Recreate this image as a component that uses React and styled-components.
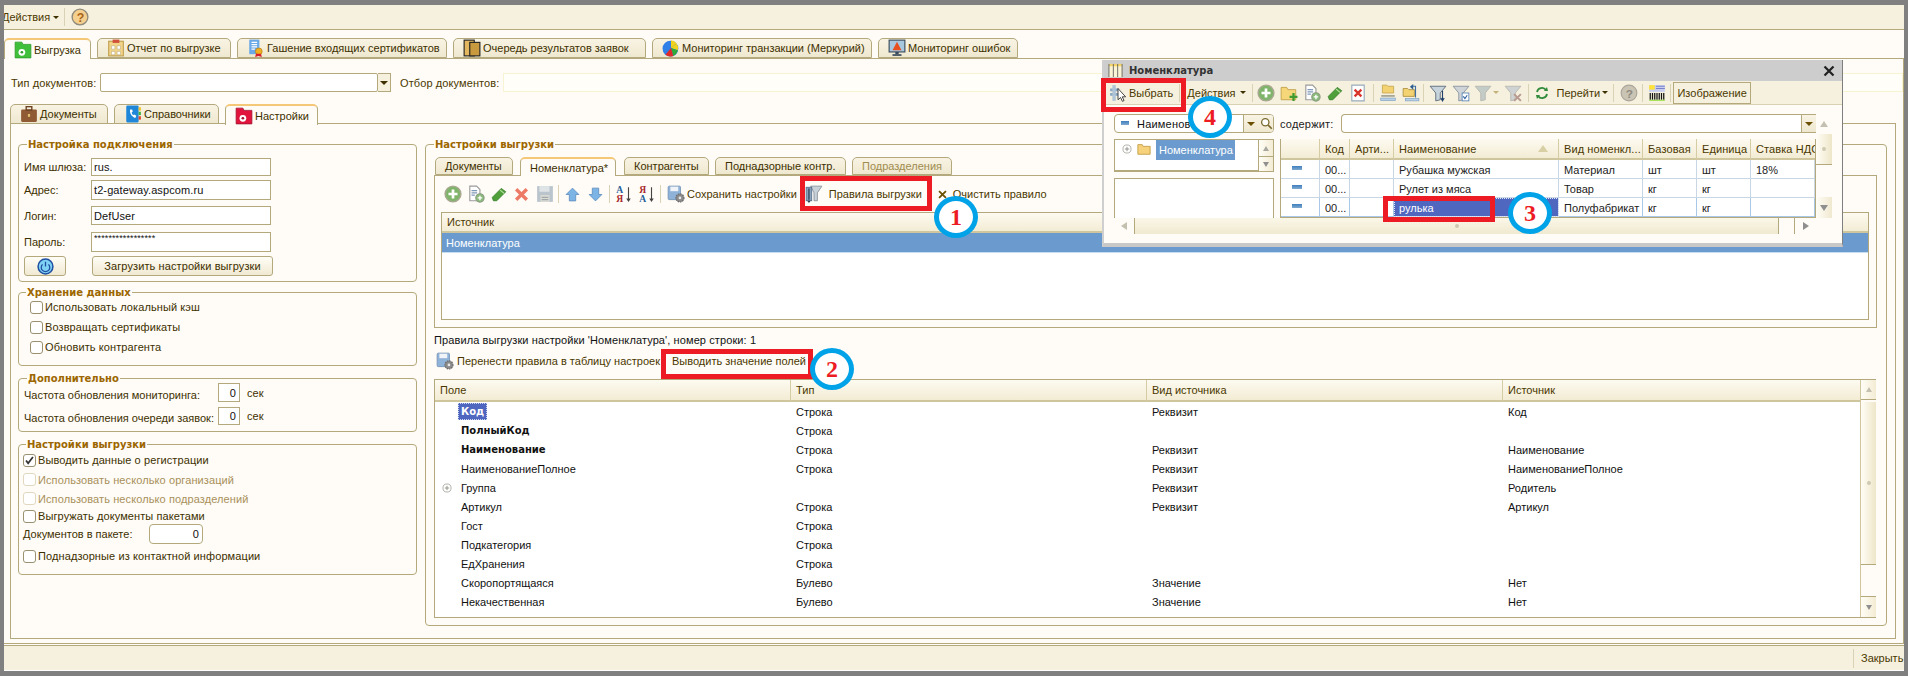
import React from "react";
import styled, { createGlobalStyle } from "styled-components";

const line = "#b3a97c";
const paper = "#fffcf7";
const bar = "#f6f1df";
const ink = "#4a3800";

const Global = createGlobalStyle`
  html, body { margin: 0; padding: 0; background: #808080; }
  * { box-sizing: border-box; }
  body { font-family: "Liberation Sans", Arial, sans-serif; font-size: 11px; color: ${ink}; }
`;

const Frame = styled.div`
  position: relative;
  width: 1908px;
  height: 676px;
  overflow: hidden;
  background: #808080;
  padding: 5px 4px 5px 4px;
  display: flex;
  flex-direction: column;
`;
const TopBar = styled.div`
  height: 25px;
  flex: none;
  background: ${bar};
  border-bottom: 1px solid ${line};
  display: flex;
  align-items: center;
  overflow: hidden;
`;
const Main = styled.div`
  flex: 1;
  min-height: 0;
  background: ${paper};
  padding-top: 8px;
  display: flex;
  flex-direction: column;
`;
const TabStrip = styled.div`
  display: flex;
  flex: none;
  height: ${(p) => p.$h}px;
  margin-left: ${(p) => p.$ml || 0}px;
  margin-top: ${(p) => p.$mt || 0}px;
  position: relative;
  z-index: 1;
`;
const Tab = styled.div`
  width: ${(p) => p.$w}px;
  margin-right: ${(p) => p.$gap ?? 6}px;
  height: ${(p) => (p.$active ? "calc(100% + 1px)" : "100%")};
  display: flex;
  align-items: center;
  gap: 2px;
  padding-left: ${(p) => p.$pl ?? 9}px;
  border: 1px solid ${line};
  border-bottom: ${(p) => (p.$active ? "none" : `1px solid ${line}`)};
  border-top: ${(p) => (p.$active ? "2px solid #f5c878" : `1px solid ${line}`)};
  border-radius: 5px 5px 0 0;
  background: ${(p) => (p.$active ? paper : "linear-gradient(#f8f3e3, #efe8d0)")};
  color: ${(p) => (p.$off ? "#a08c50" : "#3d3000")};
  white-space: nowrap;
`;
const Page = styled.div`
  flex: 1;
  min-height: 0;
  border: 1px solid ${line};
  border-width: 1px 1px 1px 0;
  padding: 14px 0 4px 6px;
  display: flex;
  flex-direction: column;
`;
const DocRow = styled.div`
  display: flex;
  align-items: center;
  height: 19px;
  flex: none;
  margin-bottom: 12px;
  padding-left: 1px;
`;
const DocLabel = styled.span`
  white-space: nowrap;
  width: ${(p) => p.$w}px;
  letter-spacing: 0.1px;
`;
const Combo = styled.div`
  width: ${(p) => p.$w}px;
  height: 19px;
  background: #fff;
  border: 1px solid ${line};
  border-radius: 2px;
`;
const ComboDrop = styled.div`
  width: 13px;
  height: 19px;
  margin: 0 9px 0 0;
  background: ${bar};
  border: 1px solid ${line};
  border-left: none;
  display: flex;
  align-items: center;
  justify-content: center;
`;
const FilterBox = styled.div`
  flex: 1;
  height: 19px;
  border: 1px solid #f8f3d0;
  background: #fffef8;
`;
const TriangleDown = styled.i`
  display: block;
  flex: none;
  width: 0;
  height: 0;
  margin-left: ${(p) => p.$ml || 0}px;
  border-left: ${(p) => p.$s || 4}px solid transparent;
  border-right: ${(p) => p.$s || 4}px solid transparent;
  border-top: ${(p) => p.$s || 4}px solid ${(p) => p.$c || "#3d3000"};
`;
const Panel = styled.div`
  flex: 1;
  min-height: 0;
  border: 1px solid ${line};
  margin-right: 7px;
  margin-top: -1px;
  padding: 20px 8px 0 7px;
  display: flex;
  gap: 8px;
`;
const LeftCol = styled.div`
  width: 399px;
  flex: none;
`;
const Group = styled.div`
  border: 1px solid ${line};
  border-radius: 4px;
  height: ${(p) => p.$h}px;
  margin-top: ${(p) => p.$mt || 0}px;
  padding-left: ${(p) => p.$pl || 0}px;
`;
const Legend = styled.div`
  display: table;
  height: 14px;
  line-height: 14px;
  margin: -7px 0 0 ${(p) => p.$ml ?? 8}px;
  padding: 0 1px;
  background: ${paper};
  color: #9c6600;
  font-family: "DejaVu Sans", sans-serif;
  font-weight: 700;
  font-size: 10px;
  white-space: nowrap;
`;
const Row = styled.div`
  display: flex;
  align-items: center;
  height: ${(p) => p.$h}px;
  margin-top: ${(p) => p.$mt || 0}px;
  white-space: nowrap;
  letter-spacing: 0.1px;
  color: ${(p) => (p.$off ? "#a8905a" : "#3d3000")};
`;
const FieldLabel = styled.span`
  display: block;
  width: ${(p) => p.$w}px;
  flex: none;
  padding-top: ${(p) => p.$pt || 0}px;
  letter-spacing: 0;
`;
const Field = styled.div`
  width: ${(p) => p.$w}px;
  height: 100%;
  background: #fff;
  border: 1px solid ${line};
  border-radius: ${(p) => p.$r || 0}px;
  padding: 0 ${(p) => (p.$right ? 3 : 2)}px;
  display: flex;
  align-items: ${(p) => (p.$top ? "flex-start" : "center")};
  justify-content: ${(p) => (p.$right ? "flex-end" : "flex-start")};
  color: #111;
  font-size: ${(p) => p.$fs || 11}px;
`;
const Btn = styled.div`
  width: ${(p) => p.$w}px;
  height: 20px;
  margin-left: ${(p) => p.$ml || 0}px;
  border: 1px solid ${line};
  border-radius: 3px;
  background: linear-gradient(#fffdf6, #f0e9d2);
  display: flex;
  align-items: center;
  justify-content: center;
  color: #3d3000;
`;
const Check = styled.span`
  width: 13px;
  height: 13px;
  flex: none;
  margin-right: 2px;
  border: 1px solid ${(p) => (p.$off ? "#e0d9c0" : "#9a9170")};
  border-radius: 3px;
  background: #fff;
  display: flex;
  align-items: center;
  justify-content: center;
`;
const Unit = styled.span`
  margin-left: 7px;
`;
const RightCol = styled.div`
  flex: 1;
  min-width: 0;
`;
const InnerPanel = styled.div`
  width: 1443px;
  height: 153px;
  margin: 0 0 0 8px;
  border: 1px solid ${line};
  padding: 0 7px 0 6px;
`;
const Tools = styled.div`
  display: flex;
  align-items: center;
  height: ${(p) => p.$h}px;
  margin-left: ${(p) => p.$ml || 0}px;
  white-space: nowrap;
  color: #4a3800;
`;
const Slot = styled.span`
  width: ${(p) => p.$w || 23}px;
  flex: none;
  display: flex;
  align-items: center;
  justify-content: center;
  margin-left: ${(p) => p.$ml || 0}px;
`;
const Sep = styled.span`
  width: 1px;
  height: 18px;
  flex: none;
  margin: 0 ${(p) => p.$r ?? 2}px 0 ${(p) => p.$l ?? 2}px;
  background: #d9d2b4;
`;
const ToolText = styled.span`
  margin-left: ${(p) => p.$ml || 0}px;
`;
const SourceTable = styled.div`
  height: 108px;
  border: 1px solid ${line};
  background: #fff;
`;
const HeadCell = styled.div`
  background: linear-gradient(#fdfaf0, #f3ecd4);
  border-bottom: 2px solid #cfc69e;
  border-right: ${(p) => (p.$noline ? "none" : `1px solid #d5cca6`)};
  height: ${(p) => p.$h || 20}px;
  display: flex;
  align-items: center;
  padding-left: ${(p) => p.$pl || 5}px;
  color: #4a3800;
  white-space: nowrap;
  overflow: hidden;
`;
const SelectedRow = styled.div`
  height: 20px;
  background: #6b9bce;
  color: #fff;
  padding-left: 4px;
  display: flex;
  align-items: center;
  border-bottom: 1px solid #c7ddf0;
`;
const RulesTitle = styled.div`
  margin: 5px 0 0 8px;
  height: 14px;
  line-height: 14px;
  color: #111;
  letter-spacing: 0.1px;
`;
const RulesBar = styled(Tools)`
  margin: 3px 0 0 8px;
  height: 22px;
`;
const RulesTable = styled.div`
  display: grid;
  grid-template-columns: 356px 356px 356px 357px 16px;
  grid-template-rows: 22px 1fr;
  width: 1442px;
  height: 239px;
  margin: 7px 0 0 8px;
  border: 1px solid ${line};
  background: #fff;
`;
const RowsBody = styled.div`
  grid-column: 1 / 5;
`;
const DataRow = styled.div`
  display: grid;
  grid-template-columns: 356px 356px 356px 357px;
  height: 19px;
  align-items: center;
  color: #111;
`;
const NameCell = styled.div`
  display: flex;
  align-items: center;
  padding-left: ${(p) => (p.$expand ? 7 : 26)}px;
  font-family: ${(p) => (p.$bold ? '"DejaVu Sans", sans-serif' : "inherit")};
  font-weight: ${(p) => (p.$bold ? 700 : 400)};
  font-size: ${(p) => (p.$bold ? 10 : 11)}px;
`;
const Hilite = styled.span`
  background: #5067c0;
  color: #fff;
  outline: 1px dotted #cdd6f0;
  outline-offset: -1px;
  padding: 3px 3px;
  margin-left: -3px;
`;
const Cell = styled.div`
  padding-left: 5px;
`;
const ExpandGap = styled.span`
  width: 9px;
  flex: none;
`;
const VBar = styled.div`
  grid-column: 5;
  grid-row: ${(p) => p.$row};
  display: flex;
  flex-direction: column;
  border-left: 1px solid #cfc69e;
  background: ${paper};
`;
const ScrollBtn = styled.div`
  height: ${(p) => p.$h}px;
  flex: none;
  display: flex;
  align-items: center;
  justify-content: center;
  background: ${(p) => p.$bg || "linear-gradient(90deg, #fffdf6, #f3ecd4)"};
  border-bottom: ${(p) => (p.$line ? `1px solid ${line}` : "none")};
  border-top: ${(p) => (p.$topline ? `1px solid ${line}` : "none")};
  width: 100%;
`;
const ScrollThumb = styled.div`
  height: ${(p) => p.$h}px;
  flex: none;
  display: flex;
  align-items: center;
  justify-content: center;
  background: linear-gradient(90deg, #fffdf6, #eee6c9);
  border-bottom: 1px solid ${line};
`;
const ScrollGap = styled.div`
  flex: 1;
`;
const Nub = styled.i`
  width: 4px;
  height: 4px;
  border-radius: 50%;
  background: #cfc9b2;
`;
const TriUp = styled.i`
  display: block;
  flex: none;
  width: 0;
  height: 0;
  border-left: ${(p) => p.$s || 4}px solid transparent;
  border-right: ${(p) => p.$s || 4}px solid transparent;
  border-bottom: ${(p) => (p.$s || 4) + 2}px solid ${(p) => p.$c || "#c4c0b0"};
`;
const TriDown = styled(TriUp)`
  border-bottom: none;
  border-top: ${(p) => (p.$s || 4) + 2}px solid ${(p) => p.$c || "#8f8f8f"};
`;
const TriRight = styled.i`
  display: block;
  width: 0;
  height: 0;
  border-top: 4px solid transparent;
  border-bottom: 4px solid transparent;
  border-left: 6px solid ${(p) => p.$c || "#8f8f8f"};
`;
const TriLeft = styled(TriRight)`
  border-left: none;
  border-right: 6px solid ${(p) => p.$c || "#c4c0b0"};
`;
const StatusBar = styled.div`
  height: 26px;
  flex: none;
  margin-top: 1px;
  background: ${bar};
  border-top: 1px solid ${line};
  border-bottom: 1px solid #fff;
  display: flex;
  align-items: center;
  justify-content: flex-end;
  overflow: hidden;
`;
const StatusSep = styled.span`
  width: 1px;
  height: 19px;
  background: #d9d2b4;
  margin-right: 7px;
`;
const CloseText = styled.span`
  width: 43px;
  overflow: hidden;
  white-space: nowrap;
`;

/* popup window */
const Window = styled.div`
  position: absolute;
  left: 1102px;
  top: 60px;
  width: 741px;
  height: 187px;
  z-index: 5;
  background: ${paper};
  border-right: 1px solid #7f7f7f;
  border-left: 2px solid #cfcfcf;
  border-bottom: 4px solid #c8c8c8;
  display: flex;
  flex-direction: column;
`;
const WinTitle = styled.div`
  height: 21px;
  flex: none;
  background: #cdcdcd;
  display: flex;
  align-items: center;
  padding: 0 7px 0 4px;
  font-family: "DejaVu Sans", sans-serif;
  font-size: 10px;
  font-weight: 700;
  color: #333;
`;
const WinName = styled.span`
  flex: 1;
  margin-left: 6px;
`;
const WinTools = styled(Tools)`
  flex: none;
  background: ${bar};
  border-bottom: 1px solid #d8d1b2;
  padding-left: 2px;
`;
const ImageBtn = styled.span`
  width: 78px;
  height: 22px;
  display: flex;
  align-items: center;
  justify-content: center;
  background: ${bar};
  border: 1px solid ${line};
  color: #4a3800;
`;
const WinBody = styled.div`
  display: flex;
  flex: none;
  padding: 9px 0 0 10px;
`;
const WinLeft = styled.div`
  width: 160px;
  flex: none;
`;
const RoundCombo = styled.div`
  height: 19px;
  border: 1px solid ${line};
  border-radius: 4px;
  background: #fff;
  display: flex;
  align-items: center;
  color: #111;
  overflow: hidden;
`;
const ComboBtn = styled.span`
  width: ${(p) => p.$w}px;
  height: 100%;
  flex: none;
  display: flex;
  align-items: center;
  justify-content: center;
  background: linear-gradient(#f8f3e3, #efe8d0);
  border-left: 1px solid ${(p) => (p.$noline ? "transparent" : line)};
  border-top: ${(p) => (p.$framed ? `1px solid ${line}` : "none")};
  border-bottom: ${(p) => (p.$framed ? `1px solid ${line}` : "none")};
`;
const ComboText = styled.span`
  flex: 1;
  min-width: 0;
  display: flex;
  align-items: center;
  gap: 8px;
  padding-left: 6px;
  letter-spacing: 0.2px;
  white-space: nowrap;
  overflow: hidden;
`;
const TreeBox = styled.div`
  height: 33px;
  margin-top: 6px;
  border: 1px solid ${line};
  border-bottom-width: 2px;
  background: #fff;
  display: flex;
`;
const TreeBody = styled.div`
  flex: 1;
  display: flex;
  align-items: flex-start;
  padding-left: 7px;
  gap: 5px;
  color: #fff;
`;
const TreeIcon = styled.span`
  padding-top: ${(p) => p.$pt}px;
`;
const TreeSel = styled.span`
  background: #6b9bce;
  height: 20px;
  width: 79px;
  display: flex;
  align-items: center;
  padding-left: 3px;
`;
const TreeRail = styled.div`
  width: 15px;
  flex: none;
  border-left: 1px solid ${line};
  display: flex;
  flex-direction: column;
`;
const GroupBox = styled.div`
  height: 40px;
  margin-top: 6px;
  border: 1px solid ${line};
  border-bottom: none;
  background: #fff;
`;
const WinRight = styled.div`
  width: 536px;
  flex: none;
  margin-left: 6px;
`;
const ContainsRow = styled.div`
  display: flex;
  align-items: center;
  height: 19px;
  color: #222;
  letter-spacing: 0.2px;
`;
const ContainsLabel = styled.span`
  width: 61px;
  flex: none;
`;
const ContainsField = styled(RoundCombo)`
  flex: 1;
  border-radius: 4px 0 0 4px;
  border-right: none;
`;
const GoodsTable = styled.div`
  margin-top: 6px;
  height: 79px;
  border: 1px solid ${line};
  border-top: none;
  background: #fff;
  display: grid;
  grid-template-columns: 39px 30px 44px 165px 84px 54px 54px 1fr;
  grid-template-rows: 21px repeat(3, 19px);
  overflow: hidden;
`;
const GCell = styled.div`
  display: flex;
  align-items: center;
  padding: 2px 0 0 5px;
  color: #222;
  white-space: nowrap;
  overflow: hidden;
  border-right: 1px solid ${(p) => (p.$sel ? "#a9c8e8" : "#c9d6e4")};
  border-bottom: 1px solid ${(p) => (p.$sel ? "#a9c8e8" : "#c9d6e4")};
`;
const GSelected = styled(GCell)`
  background: #5067c0;
  color: #fff;
  outline: 1px dotted #dfe6fa;
  outline-offset: -1px;
`;
const GHead = styled(HeadCell)`
  height: 21px;
  padding-left: 5px;
  letter-spacing: 0.1px;
  justify-content: ${(p) => (p.$between ? "space-between" : "flex-start")};
  padding-right: 10px;
`;
const RowMark = styled.i`
  display: block;
  flex: none;
  width: ${(p) => p.$w || 10}px;
  height: 4px;
  margin: 0 0 ${(p) => p.$mb ?? 4}px ${(p) => p.$ml ?? 6}px;
  background: linear-gradient(#3f7fbf, #7fa9cf);
`;
const WinRail = styled.div`
  width: 16px;
  flex: none;
  height: 104px;
  display: flex;
  flex-direction: column;
`;
const WinHScroll = styled.div`
  display: flex;
  height: 16px;
  width: 702px;
  margin-left: 10px;
  background: ${paper};
`;
const HBtn = styled.div`
  width: ${(p) => p.$w}px;
  flex: none;
  display: flex;
  align-items: center;
  justify-content: center;
  background: ${paper};
  border-right: ${(p) => (p.$r ? `1px solid ${line}` : "none")};
  border-left: ${(p) => (p.$l ? `1px solid ${line}` : "none")};
`;
const HThumb = styled.div`
  flex: 1;
  display: flex;
  align-items: center;
  justify-content: center;
  background: linear-gradient(#fbf7e8, #f0e9d0);
  border-right: 1px solid ${line};
`;
const HGap = styled.div`
  width: 15px;
  flex: none;
`;

/* paint marks over the screenshot */
const RedBox = styled.div`
  position: absolute;
  left: ${(p) => p.$x}px;
  top: ${(p) => p.$y}px;
  width: ${(p) => p.$w}px;
  height: ${(p) => p.$h}px;
  border: 5px solid #ed1c24;
  z-index: 8;
`;
const Mark = styled.div`
  position: absolute;
  left: ${(p) => p.$x - 22}px;
  top: ${(p) => p.$y - 21}px;
  width: 44px;
  height: 42px;
  border: 5px solid #00a2e8;
  border-radius: 50%;
  background: #fff;
  z-index: 9;
  display: flex;
  align-items: center;
  justify-content: center;
  color: #ed1c24;
  font: 700 24px "Liberation Serif", serif;
`;

const Svg = ({ children, s = 16 }) => (
  <svg width={s} height={s} viewBox="0 0 16 16" style={{ display: "block", flex: "none" }}>
    {children}
  </svg>
);

const PlusGreen = () => (
  <Svg s={18}>
    <circle cx="8" cy="8" r="7" fill="#7fb56a" stroke="#a8a890" strokeWidth="1.3" />
    <path d="M8 4v8M4 8h8" stroke="#fff" strokeWidth="2.4" />
  </Svg>
);
const DocPlus = () => (
  <Svg s={18}>
    <path d="M2.5 1h6l3 3v10h-9z" fill="#fff" stroke="#9a9a9a" />
    <path d="M4 5h5M4 7h5M4 9h3" stroke="#7f97b8" />
    <circle cx="11.5" cy="11.5" r="3.7" fill="#8abb7a" stroke="#8a9a80" />
    <path d="M11.5 9.5v4M9.5 11.5h4" stroke="#fff" strokeWidth="1.2" />
  </Svg>
);
const Pencil = () => (
  <Svg s={18}>
    <path d="M2 11L10 3l4 3-8 8H3z" fill="#4fa03a" stroke="#2f7a24" strokeWidth=".7" />
    <path d="M9 4.5l3.5 3" stroke="#bfe3a8" />
  </Svg>
);
const CrossRed = () => (
  <Svg s={17}>
    <path d="M3 3l10 10M13 3L3 13" stroke="#ec7a66" strokeWidth="3.2" />
  </Svg>
);
const FloppyGrey = () => (
  <Svg s={18}>
    <rect x="1" y="1" width="14" height="14" fill="#b9c4cc" />
    <rect x="3" y="1" width="9" height="5" fill="#dfe4e6" />
    <rect x="4" y="9" width="8" height="6" fill="#dcdcd4" />
    <path d="M5 11h6M5 13h6" stroke="#a0a8ac" />
  </Svg>
);
const ArrowBlue = ({ down }) => (
  <Svg s={17}>
    <path
      d={down ? "M5 2h6v6h3l-6 6-6-6h3z" : "M8 2l6 6h-3v6H5V8H2z"}
      fill="#7db4e6"
      stroke="#5f8fbf"
      strokeWidth=".8"
    />
  </Svg>
);
const Sort = ({ rev }) => (
  <Svg s={18}>
    <text x="1" y="7.5" fontSize="8.5" fontWeight="700" fontFamily="Liberation Serif" fill={rev ? "#a8282c" : "#1f5f9a"}>
      {rev ? "Я" : "A"}
    </text>
    <text x="1" y="15.5" fontSize="8.5" fontWeight="700" fontFamily="Liberation Serif" fill={rev ? "#1f5f9a" : "#a8282c"}>
      {rev ? "A" : "Я"}
    </text>
    <path d="M12 2v11" stroke="#444" />
    <path d="M10 12h4l-2 3z" fill="#444" />
  </Svg>
);
const FloppyGear = () => (
  <Svg s={18}>
    <rect x="1" y="1" width="11" height="12" rx="1" fill="#8fb2d8" stroke="#6f8fb2" strokeWidth=".7" />
    <rect x="3" y="1.5" width="7" height="4" fill="#f0f4f8" />
    <circle cx="11.5" cy="11.5" r="3.6" fill="#8a8a8a" stroke="#6a6a6a" strokeDasharray="1.3 .8" />
    <circle cx="11.5" cy="11.5" r="1.2" fill="#e8e8e8" />
  </Svg>
);
const Funnel = ({ muted, tone = "#c8d4dc" }) => (
  <Svg s={18}>
    <path d="M1 2h14L10 8v6l-4 1V8z" fill={tone} stroke={muted ? "#b8b8b0" : "#5a6a78"} strokeWidth=".8" />
    {!muted && <path d="M12 6v8M10.5 12.5L12 15l1.5-2.5" stroke="#1f3f6a" fill="none" />}
  </Svg>
);
const FunnelCheck = () => (
  <Svg s={18}>
    <path d="M1 2h14L10 8v6l-4 1V8z" fill="#cfd4d8" stroke="#8a949c" strokeWidth=".8" />
    <rect x="9" y="8" width="6" height="7" fill="#fff" stroke="#4a78b0" strokeWidth=".7" />
    <path d="M10 11l1.5 2 2-3" stroke="#2f5f9f" fill="none" />
  </Svg>
);
const FunnelOff = () => (
  <Svg s={18}>
    <path d="M1 2h14L10 8v6l-4 1V8z" fill="#cfd2d2" stroke="#b8b8b0" strokeWidth=".8" />
    <path d="M9 9l6 6M15 9l-6 6" stroke="#b89a90" strokeWidth="1.8" />
  </Svg>
);
const FolderPlus = () => (
  <Svg s={18}>
    <path d="M1 3h5l1 2h7v9H1z" fill="#f5d77a" stroke="#c2a24a" strokeWidth=".8" />
    <path d="M12 8v7M8.5 11.5h7" stroke="#3f9a2f" strokeWidth="2" />
  </Svg>
);
const DocCross = () => (
  <Svg s={18}>
    <path d="M2.5 1h11v14h-11z" fill="#fff" stroke="#9ab" />
    <path d="M5 5l6 6M11 5l-6 6" stroke="#d8342a" strokeWidth="2" />
  </Svg>
);
const FolderLine = () => (
  <Svg s={18}>
    <path d="M3 1h4l1 1h5v6H3z" fill="#f3d271" stroke="#c2a24a" strokeWidth=".7" />
    <rect x="2" y="10" width="12" height="1.2" fill="#8e8e7a" />
    <rect x="1.5" y="12.5" width="13" height="2.2" fill="#b8d2ea" stroke="#7f9fbf" strokeWidth=".6" />
  </Svg>
);
const FolderUp = () => (
  <Svg s={18}>
    <path d="M1 4h4l1 1h5v6H1z" fill="#f3d271" stroke="#a68a3a" strokeWidth=".7" />
    <path d="M9 2h3v10" stroke="#3f6f9f" fill="none" />
    <path d="M7 2.5L10 0v5z" fill="#2f5f8f" />
    <rect x="3" y="13" width="12" height="2" fill="#b8d2ea" stroke="#7f9fbf" strokeWidth=".6" />
  </Svg>
);
const Refresh = () => (
  <Svg>
    <path d="M3 7a5 5 0 0 1 9-2" stroke="#2f8a3a" strokeWidth="1.8" fill="none" />
    <path d="M13 9a5 5 0 0 1-9 2" stroke="#2f8a3a" strokeWidth="1.8" fill="none" />
    <path d="M10 6l4 0-1-4zM6 10H2l1 4z" fill="#2f8a3a" />
  </Svg>
);
const HelpGrey = () => (
  <Svg s={18}>
    <circle cx="8" cy="8" r="7" fill="#c9c4b4" stroke="#aaa59a" />
    <text x="5.2" y="12" fontSize="10.5" fontWeight="700" fontFamily="Liberation Sans" fill="#8f8a80">?</text>
  </Svg>
);
const Barcode = () => (
  <Svg s={18}>
    <rect x="1" y="1" width="14" height="6" fill="#c8cdf0" />
    <rect x="1" y="1" width="5" height="4" fill="#ffe23a" />
    <path d="M7 2h8M7 4h8" stroke="#7a82c8" />
    <path d="M2 8v6M4 8v6M6 8v6M8 8v6M10 8v6M12 8v6M14 8v6" stroke="#111" strokeWidth="1.1" />
    <rect x="1" y="14" width="14" height="1" fill="#9ce04a" />
  </Svg>
);
const PickArrow = () => (
  <Svg s={18}>
    <rect x="1" y="4" width="8" height="2.5" fill="#8aa8c4" />
    <rect x="1" y="8" width="8" height="2.5" fill="#8aa8c4" />
    <rect x="3" y="1" width="3" height="14" fill="#b0c4d8" />
    <path d="M8 4v10l2.3-2 1.6 3.4 1.5-.7-1.6-3.3h3z" fill="#fff" stroke="#333" strokeWidth=".8" />
  </Svg>
);
const RulesIcon = () => (
  <Svg s={18}>
    <path d="M5 1h10L11 7v7H8V7z" fill="#c8d0d8" stroke="#7a8894" strokeWidth=".7" />
    <rect x="1" y="2" width="5" height="12" fill="#8aa2bc" stroke="#4f6a88" strokeWidth=".7" />
    <path d="M3.5 3v10" stroke="#23394f" />
    <path d="M2 14h3l-1.5 2z" fill="#23394f" />
  </Svg>
);
const XBrown = () => (
  <Svg s={11}>
    <path d="M3 3l10 10M13 3L3 13" stroke="#6a5000" strokeWidth="2.6" />
  </Svg>
);
const Expander = () => (
  <Svg s={10}>
    <circle cx="8" cy="8" r="6.5" fill="#fff" stroke="#a8a8a0" strokeWidth="1.4" />
    <path d="M8 4.5v7M4.5 8h7" stroke="#8a8a82" strokeWidth="1.4" />
  </Svg>
);
const Folder = () => (
  <Svg s={14}>
    <path d="M1 3h5l1 2h8v9H1z" fill="#f7d27c" stroke="#c29a42" />
  </Svg>
);
const Power = () => (
  <Svg s={17}>
    <circle cx="8" cy="8" r="7" fill="#7fd0f5" stroke="#1f4fa0" strokeWidth="1.4" />
    <path d="M5.2 6a4 4 0 1 0 5.6 0" stroke="#1f4fa0" strokeWidth="1.2" fill="none" />
    <path d="M8 3.5V8" stroke="#1f4fa0" strokeWidth="1.2" />
  </Svg>
);
const TabFolder = ({ c = "#3fbf3a", dark = "#2e9a2a" }) => (
  <Svg s={18}>
    <path d="M1 1h6l1 2h7v12H1z" fill={c} stroke={dark} strokeWidth=".7" />
    <circle cx="7" cy="10" r="3" fill="#fff" />
    <circle cx="7" cy="10" r="1.2" fill={dark} />
  </Svg>
);
const Clipboard = () => (
  <Svg s={18}>
    <rect x="1.5" y="2" width="13" height="13" fill="#f3d58a" stroke="#c0a050" />
    <rect x="5" y="0.5" width="6" height="3" fill="#d0523a" />
    <path d="M4 6h3v3H4zM9 6h3v3H9zM4 11h3v3H4zM9 11h3v3H9z" fill="#fff" stroke="#a89a70" strokeWidth=".4" />
  </Svg>
);
const Cert = () => (
  <Svg s={18}>
    <rect x="2" y="0.5" width="9" height="13" fill="#6aa8e8" />
    <path d="M4 3h5M4 5h5M4 7h5M4 9h3" stroke="#fff" strokeWidth=".9" />
    <circle cx="10.5" cy="11" r="3" fill="#f0b020" stroke="#b87a10" strokeWidth=".6" />
    <path d="M8 13l-.8 3 3-1 3 1-.8-3z" fill="#d8202a" />
  </Svg>
);
const Queue = () => (
  <Svg s={18}>
    <rect x="1" y="1" width="9" height="14" fill="#e2b760" stroke="#222" />
    <rect x="6" y="3" width="9" height="12" fill="#c8993e" stroke="#222" />
  </Svg>
);
const Pie = () => (
  <Svg s={18}>
    <circle cx="7.5" cy="8.5" r="7" fill="#2f7fe8" />
    <path d="M8 8V1a7 7 0 0 1 5 3z" fill="#f2d21a" />
    <path d="M8 8l5-4a7 7 0 0 1 1 6z" fill="#f2d21a" />
    <path d="M8 8l6 2a7 7 0 0 1-4 5z" fill="#2faa3a" />
    <path d="M8 8l2 7a7 7 0 0 1-7-1z" fill="#e02a2a" />
  </Svg>
);
const Monitor = () => (
  <Svg s={18}>
    <rect x="1" y="1" width="14" height="10.5" fill="#a8c8e0" stroke="#3a4a5a" />
    <path d="M8 2.5l4 7.5H4z" fill="#e8501f" />
    <rect x="6.5" y="11.5" width="3" height="2" fill="#3a4a5a" />
    <rect x="4" y="13.5" width="8" height="1.5" fill="#3a4a5a" />
  </Svg>
);
const Briefcase = () => (
  <Svg s={18}>
    <rect x="1" y="4" width="14" height="11" rx="1" fill="#8f5a34" />
    <rect x="5.5" y="1.5" width="5" height="3" fill="none" stroke="#6b4020" strokeWidth="1.2" />
    <rect x="7" y="8" width="2" height="2.5" fill="#e0c070" />
  </Svg>
);
const PhoneBook = () => (
  <Svg s={18}>
    <rect x="2" y="0.5" width="11" height="15" rx="1" fill="#1f86d8" />
    <path d="M5.5 4c-1 3 1.5 6.5 4.5 7.5l1-2-2-1-1 .6c-.7-.8-1-1.7-1.2-2.6l1-.5L7.3 4z" fill="#fff" />
    <rect x="13" y="2" width="2" height="3" fill="#f0c020" />
    <rect x="13" y="6" width="2" height="3" fill="#3fb03a" />
    <rect x="13" y="10" width="2" height="3" fill="#e0402a" />
  </Svg>
);
const HelpOrange = () => (
  <Svg s={18}>
    <circle cx="8" cy="8" r="7" fill="#f5cf8e" stroke="#8f8a7a" strokeWidth="1.2" />
    <text x="5" y="12.3" fontSize="11" fontWeight="700" fontFamily="Liberation Sans" fill="#a8641a">?</text>
  </Svg>
);
const Tick = () => (
  <Svg s={11}>
    <path d="M3 8l3 4 7-9" stroke="#333" strokeWidth="2.6" fill="none" />
  </Svg>
);
const MiniX = () => (
  <Svg s={12}>
    <path d="M2 2l12 12M14 2L2 14" stroke="#222" strokeWidth="3" />
  </Svg>
);
const Magnifier = () => (
  <Svg s={13}>
    <circle cx="6.5" cy="6.5" r="4.5" fill="#fff" stroke="#7a6a30" strokeWidth="1.6" />
    <path d="M10 10l4.5 4.5" stroke="#7a6a30" strokeWidth="2" />
  </Svg>
);
const TableGlyph = () => (
  <Svg s={15}>
    <rect x="1" y="2" width="14" height="13" fill="#fbf3d6" />
    <rect x="1" y="1" width="14" height="2.5" fill="#f2d46a" />
    <path d="M1 1v14M5.7 1v14M10.3 1v14M15 1v14" stroke="#6a6a60" />
  </Svg>
);

const rows = [
  { n: "Код", t: "Строка", k: "Реквизит", s: "Код", sel: true, b: true },
  { n: "ПолныйКод", t: "Строка", b: true },
  { n: "Наименование", t: "Строка", k: "Реквизит", s: "Наименование", b: true },
  { n: "НаименованиеПолное", t: "Строка", k: "Реквизит", s: "НаименованиеПолное" },
  { n: "Группа", k: "Реквизит", s: "Родитель", exp: true },
  { n: "Артикул", t: "Строка", k: "Реквизит", s: "Артикул" },
  { n: "Гост", t: "Строка" },
  { n: "Подкатегория", t: "Строка" },
  { n: "ЕдХранения", t: "Строка" },
  { n: "Скоропортящаяся", t: "Булево", k: "Значение", s: "Нет" },
  { n: "Некачественная", t: "Булево", k: "Значение", s: "Нет" },
];

const goods = [
  ["00...", "", "Рубашка мужская", "Материал", "шт", "шт", "18%"],
  ["00...", "", "Рулет из мяса", "Товар", "кг", "кг", ""],
  ["00...", "", "рулька", "Полуфабрикат", "кг", "кг", ""],
];

const App = () => (
  <Frame>
    <Global />
    <TopBar>
      <Tools $h={24} $ml={-2}>
        <ToolText>Действия</ToolText>
        <TriangleDown $ml={3} $s={3} />
        <Sep $l={5} $r={6} />
        <HelpOrange />
      </Tools>
    </TopBar>
    <Main>
      <TabStrip $h={20}>
        <Tab $w={87} $active><TabFolder />Выгрузка</Tab>
        <Tab $w={134}><Clipboard />Отчет по выгрузке</Tab>
        <Tab $w={210}><Cert />Гашение входящих сертификатов</Tab>
        <Tab $w={193}><Queue />Очередь результатов заявок</Tab>
        <Tab $w={220}><Pie />Мониторинг транзакции (Меркурий)</Tab>
        <Tab $w={140}><Monitor />Мониторинг ошибок</Tab>
      </TabStrip>
      <Page>
        <DocRow>
          <DocLabel $w={89}>Тип документов:</DocLabel>
          <Combo $w={278} />
          <ComboDrop><TriangleDown /></ComboDrop>
          <DocLabel $w={103}>Отбор документов:</DocLabel>
          <FilterBox />
        </DocRow>
        <TabStrip $h={20}>
          <Tab $w={98}><Briefcase />Документы</Tab>
          <Tab $w={105}><PhoneBook />Справочники</Tab>
          <Tab $w={93} $active><TabFolder c="#e0143c" dark="#a01030" />Настройки</Tab>
        </TabStrip>
        <Panel>
          <LeftCol>
            <Group $h={138} $pl={5}>
              <Legend $ml={3}>Настройка подключения</Legend>
              <Row $h={18} $mt={6}><FieldLabel $w={67}>Имя шлюза:</FieldLabel><Field $w={180}>rus.</Field></Row>
              <Row $h={20} $mt={4}><FieldLabel $w={67}>Адрес:</FieldLabel><Field $w={180}>t2-gateway.aspcom.ru</Field></Row>
              <Row $h={19} $mt={6}><FieldLabel $w={67}>Логин:</FieldLabel><Field $w={180}>DefUser</Field></Row>
              <Row $h={20} $mt={7}><FieldLabel $w={67}>Пароль:</FieldLabel><Field $w={180} $top $fs={9}>*****************</Field></Row>
              <Row $h={20} $mt={4}>
                <Btn $w={42}><Power /></Btn>
                <Btn $w={181} $ml={26}>Загрузить настройки выгрузки</Btn>
              </Row>
            </Group>
            <Group $h={74} $mt={10} $pl={11}>
              <Legend $ml={-4}>Хранение данных</Legend>
              <Row $h={20} $mt={-3}><Check />Использовать локальный кэш</Row>
              <Row $h={20}><Check />Возвращать сертификаты</Row>
              <Row $h={20}><Check />Обновить контрагента</Row>
            </Group>
            <Group $h={54} $mt={12} $pl={5}>
              <Legend $ml={3}>Дополнительно</Legend>
              <Row $h={19} $mt={-3}>
                <FieldLabel $w={194} $pt={4}>Частота обновления мониторинга:</FieldLabel>
                <Field $w={22} $right>0</Field>
                <Unit>сек</Unit>
              </Row>
              <Row $h={18} $mt={5}>
                <FieldLabel $w={194} $pt={4}>Частота обновления очереди заявок:</FieldLabel>
                <Field $w={22} $right>0</Field>
                <Unit>сек</Unit>
              </Row>
            </Group>
            <Group $h={131} $mt={12} $pl={4}>
              <Legend $ml={3}>Настройки выгрузки</Legend>
              <Row $h={18} $mt={-1}><Check><Tick /></Check>Выводить данные о регистрации</Row>
              <Row $h={19} $mt={1} $off><Check $off />Использовать несколько организаций</Row>
              <Row $h={19} $off><Check $off />Использовать несколько подразделений</Row>
              <Row $h={18} $mt={-1}><Check />Выгружать документы пакетами</Row>
              <Row $h={20} $mt={-1}>
                <FieldLabel $w={126}>Документов в пакете:</FieldLabel>
                <Field $w={54} $r={4} $right>0</Field>
              </Row>
              <Row $h={18} $mt={3}><Check />Поднадзорные из контактной информации</Row>
            </Group>
          </LeftCol>
          <RightCol>
            <Group $h={482}>
              <Legend $ml={8}>Настройки выгрузки</Legend>
              <TabStrip $h={18} $ml={9} $mt={5}>
                <Tab $w={78} $gap={7}>Документы</Tab>
                <Tab $w={96} $gap={8} $active>Номенклатура*</Tab>
                <Tab $w={85}>Контрагенты</Tab>
                <Tab $w={131}>Поднадзорные контр.</Tab>
                <Tab $w={100} $off>Подразделения</Tab>
              </TabStrip>
              <InnerPanel>
                <Tools $h={36}>
                  <Slot><PlusGreen /></Slot>
                  <Slot><DocPlus /></Slot>
                  <Slot><Pencil /></Slot>
                  <Slot><CrossRed /></Slot>
                  <Slot><FloppyGrey /></Slot>
                  <Sep />
                  <Slot><ArrowBlue /></Slot>
                  <Slot><ArrowBlue down /></Slot>
                  <Sep />
                  <Slot><Sort /></Slot>
                  <Slot><Sort rev /></Slot>
                  <Sep $l={2} $r={3} />
                  <Slot><FloppyGear /></Slot>
                  <ToolText>Сохранить настройки</ToolText>
                  <Slot $ml={6}><RulesIcon /></Slot>
                  <ToolText $ml={3}>Правила выгрузки</ToolText>
                  <Slot $w={16} $ml={13}><XBrown /></Slot>
                  <ToolText $ml={2}>Очистить правило</ToolText>
                </Tools>
                <SourceTable>
                  <HeadCell $noline>Источник</HeadCell>
                  <SelectedRow>Номенклатура</SelectedRow>
                </SourceTable>
              </InnerPanel>
              <RulesTitle>Правила выгрузки настройки 'Номенклатура', номер строки: 1</RulesTitle>
              <RulesBar>
                <Slot $w={16} $ml={3}><FloppyGear /></Slot>
                <ToolText $ml={4}>Перенести правила в таблицу настроек</ToolText>
                <ToolText $ml={12}>Выводить значение полей</ToolText>
              </RulesBar>
              <RulesTable>
                <HeadCell $h={22}>Поле</HeadCell>
                <HeadCell $h={22}>Тип</HeadCell>
                <HeadCell $h={22}>Вид источника</HeadCell>
                <HeadCell $h={22} $noline>Источник</HeadCell>
                <VBar $row={1}>
                  <ScrollBtn $h={20} $line><TriUp $s={3} /></ScrollBtn>
                </VBar>
                <RowsBody>
                  {rows.map((r) => (
                    <DataRow key={r.n}>
                      <NameCell $bold={r.b} $expand={r.exp}>
                        {r.exp && <Expander />}
                        {r.exp && <ExpandGap />}
                        {r.sel ? <Hilite>{r.n}</Hilite> : r.n}
                      </NameCell>
                      <Cell>{r.t}</Cell>
                      <Cell>{r.k}</Cell>
                      <Cell>{r.s}</Cell>
                    </DataRow>
                  ))}
                </RowsBody>
                <VBar $row={2}>
                  <ScrollThumb $h={163}><Nub /></ScrollThumb>
                  <ScrollGap />
                  <ScrollBtn $h={21} $topline><TriDown $s={3} /></ScrollBtn>
                </VBar>
              </RulesTable>
            </Group>
          </RightCol>
        </Panel>
      </Page>
      <StatusBar>
        <StatusSep />
        <CloseText>Закрыть</CloseText>
      </StatusBar>
    </Main>

    <Window>
      <WinTitle>
        <TableGlyph />
        <WinName>Номенклатура</WinName>
        <MiniX />
      </WinTitle>
      <WinTools $h={24}>
        <Slot><PickArrow /></Slot>
        <ToolText>Выбрать</ToolText>
        <Sep $l={6} $r={7} />
        <ToolText>Действия</ToolText>
        <TriangleDown $ml={4} $s={3} />
        <Sep $l={6} $r={2} />
        <Slot><PlusGreen /></Slot>
        <Slot><FolderPlus /></Slot>
        <Slot><DocPlus /></Slot>
        <Slot><Pencil /></Slot>
        <Slot><DocCross /></Slot>
        <Sep $l={3} $r={3} />
        <Slot><FolderLine /></Slot>
        <Slot><FolderUp /></Slot>
        <Sep $l={0} $r={3} />
        <Slot><Funnel /></Slot>
        <Slot><FunnelCheck /></Slot>
        <Slot $w={20}><Funnel muted tone="#c4ccc8" /></Slot>
        <TriangleDown $s={3} $c="#c4b27a" />
        <Slot $ml={3}><FunnelOff /></Slot>
        <Sep $l={3} $r={2} />
        <Slot><Refresh /></Slot>
        <ToolText $ml={3}>Перейти</ToolText>
        <TriangleDown $ml={2} $s={3} />
        <Sep $l={5} $r={3} />
        <Slot><HelpGrey /></Slot>
        <Sep />
        <Slot><Barcode /></Slot>
        <Sep />
        <ImageBtn>Изображение</ImageBtn>
      </WinTools>
      <WinBody>
        <WinLeft>
          <RoundCombo>
            <ComboText>
              <RowMark $w={8} $ml={0} $mb={2} />
              Наименование
            </ComboText>
            <ComboBtn $w={15}><TriangleDown $c="#6a5000" /></ComboBtn>
            <ComboBtn $w={15} $noline><Magnifier /></ComboBtn>
          </RoundCombo>
          <TreeBox>
            <TreeBody>
              <TreeIcon $pt={4}><Expander /></TreeIcon>
              <TreeIcon $pt={2}><Folder /></TreeIcon>
              <TreeSel>Номенклатура</TreeSel>
            </TreeBody>
            <TreeRail>
              <ScrollBtn $h={17} $line><TriUp $s={3} $c="#a8a8a0" /></ScrollBtn>
              <ScrollBtn $h={14}><TriDown $s={3} /></ScrollBtn>
            </TreeRail>
          </TreeBox>
          <GroupBox />
        </WinLeft>
        <WinRight>
          <ContainsRow>
            <ContainsLabel>содержит:</ContainsLabel>
            <ContainsField />
            <ComboBtn $w={15} $framed>
              <TriangleDown $c="#6a5000" />
            </ComboBtn>
          </ContainsRow>
          <GoodsTable>
            <GHead />
            <GHead>Код</GHead>
            <GHead>Арти...</GHead>
            <GHead $between>Наименование<TriUp $s={5} $c="#d8cfa4" /></GHead>
            <GHead>Вид номенкл...</GHead>
            <GHead>Базовая</GHead>
            <GHead>Единица</GHead>
            <GHead $noline>Ставка НДС</GHead>
            {goods.map((g, i) => (
              <React.Fragment key={g[2]}>
                <GCell $sel={i === 2}><RowMark /></GCell>
                {g.map((c, j) =>
                  i === 2 && j === 2 ? (
                    <GSelected key={j}>{c}</GSelected>
                  ) : (
                    <GCell key={j} $sel={i === 2}>{c}</GCell>
                  )
                )}
              </React.Fragment>
            ))}
          </GoodsTable>
        </WinRight>
        <WinRail>
          <ScrollBtn $h={20} $bg={paper}><TriUp $s={4} /></ScrollBtn>
          <ScrollThumb $h={31}><Nub /></ScrollThumb>
          <ScrollGap />
          <ScrollBtn $h={21} $bg="linear-gradient(90deg, #fffdf6, #f0e9d0)"><TriDown $s={4} /></ScrollBtn>
        </WinRail>
      </WinBody>
      <WinHScroll>
        <HBtn $w={21} $r><TriLeft /></HBtn>
        <HThumb><Nub /></HThumb>
        <HGap />
        <HBtn $w={22} $l><TriRight /></HBtn>
      </WinHScroll>
    </Window>

    <RedBox $x={800} $y={176} $w={132} $h={35} />
    <RedBox $x={661} $y={349} $w={152} $h={30} />
    <RedBox $x={1383} $y={196} $w={112} $h={26} />
    <RedBox $x={1101} $y={78} $w={85} $h={34} />
    <Mark $x={956} $y={217}>1</Mark>
    <Mark $x={832} $y={369}>2</Mark>
    <Mark $x={1530} $y={213}>3</Mark>
    <Mark $x={1210} $y={117}>4</Mark>
  </Frame>
);

export default App;
